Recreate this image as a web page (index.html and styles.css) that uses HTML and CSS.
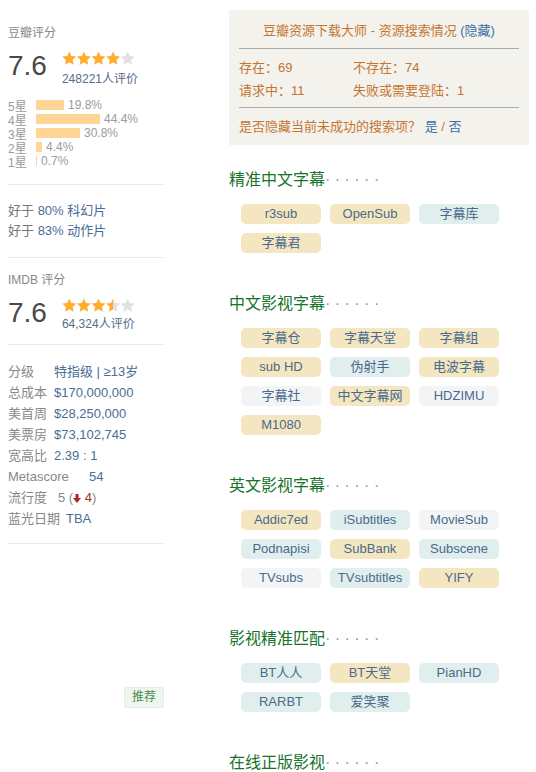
FILE: index.html
```html
<!DOCTYPE html>
<html lang="zh-CN">
<head>
  <meta charset="UTF-8" />
  <title>豆瓣资源下载大师</title>
  <link rel="stylesheet" href="styles.css">
</head>
<body>
  <div class="page">
    <aside class="aside">
      <div class="block block-douban">
        <div class="rating-title">豆瓣评分</div>
        <div class="rating-row">
          <strong class="rating-num">7.6</strong>
          <div class="rating-side">
            <svg class="stars" width="73" height="15" viewBox="0 0 73 15">
              <defs>
                <polygon id="starA" points="7.3,0 9.36,4.45 14.24,5.04 10.63,8.39 11.59,13.21 7.3,10.8 3.01,13.21 3.97,8.39 0.36,5.04 5.24,4.45" />
              </defs>
              <use href="#starA" x="0" y="0.5" fill="#ffac2d" />
              <use href="#starA" x="14.6" y="0.5" fill="#ffac2d" />
              <use href="#starA" x="29.2" y="0.5" fill="#ffac2d" />
              <use href="#starA" x="43.8" y="0.5" fill="#ffac2d" />
              <use href="#starA" x="58.4" y="0.5" fill="#e1e1e1" />
            </svg>
            <a class="rating-people">248221人评价</a>
          </div>
        </div>
        <div class="bars">
          <div class="bar-row"><span class="bar-label">5星</span><span class="bar" style="width: 28px"></span><span class="bar-pct">19.8%</span></div>
          <div class="bar-row"><span class="bar-label">4星</span><span class="bar" style="width: 64px"></span><span class="bar-pct">44.4%</span></div>
          <div class="bar-row"><span class="bar-label">3星</span><span class="bar" style="width: 44px"></span><span class="bar-pct">30.8%</span></div>
          <div class="bar-row"><span class="bar-label">2星</span><span class="bar" style="width: 6px"></span><span class="bar-pct">4.4%</span></div>
          <div class="bar-row"><span class="bar-label">1星</span><span class="bar" style="width: 1px"></span><span class="bar-pct">0.7%</span></div>
        </div>
      </div>

      <div class="block block-better">
        <div class="better">好于 <a>80% 科幻片</a></div>
        <div class="better">好于 <a>83% 动作片</a></div>
      </div>

      <div class="block block-imdb">
        <div class="rating-title">IMDB 评分</div>
        <div class="rating-row">
          <strong class="rating-num">7.6</strong>
          <div class="rating-side">
            <svg class="stars" width="73" height="15" viewBox="0 0 73 15">
              <defs>
                <polygon id="starB" points="7.3,0 9.36,4.45 14.24,5.04 10.63,8.39 11.59,13.21 7.3,10.8 3.01,13.21 3.97,8.39 0.36,5.04 5.24,4.45" />
                <linearGradient id="halfStar" x1="0" x2="1" y1="0" y2="0">
                  <stop offset="50%" stop-color="#ffac2d" />
                  <stop offset="50%" stop-color="#e1e1e1" />
                </linearGradient>
              </defs>
              <use href="#starB" x="0" y="0.5" fill="#ffac2d" />
              <use href="#starB" x="14.6" y="0.5" fill="#ffac2d" />
              <use href="#starB" x="29.2" y="0.5" fill="#ffac2d" />
              <use href="#starB" x="43.8" y="0.5" fill="url(#halfStar)" />
              <use href="#starB" x="58.4" y="0.5" fill="#e1e1e1" />
            </svg>
            <a class="rating-people">64,324人评价</a>
          </div>
        </div>
      </div>

      <div class="block block-info">
        <div class="info-row"><span class="pl">分级</span><a>特指级 | ≥13岁</a></div>
        <div class="info-row"><span class="pl">总成本</span><a>$170,000,000</a></div>
        <div class="info-row"><span class="pl">美首周</span><a>$28,250,000</a></div>
        <div class="info-row"><span class="pl">美票房</span><a>$73,102,745</a></div>
        <div class="info-row"><span class="pl">宽高比</span><a>2.39 : 1</a></div>
        <div class="info-row"><span class="pl pl-meta">Metascore</span><a>54</a></div>
        <div class="info-row"><span class="pl pl-pop">流行度</span><span class="pop">5 (<svg class="down" width="8" height="9" viewBox="0 0 8 9"><path d="M2.5 0h3v4h2.5L4 9 0 4h2.5z" fill="#b3261e" /></svg> <span class="pop-num">4</span>)</span></div>
        <div class="info-row"><span class="pl pl-date">蓝光日期</span><a>TBA</a></div>
      </div>

      <div class="recommend-wrap">
        <span class="recommend">推荐</span>
      </div>
    </aside>

    <main class="main">
      <div class="status-box">
        <div class="status-title">豆瓣资源下载大师 - 资源搜索情况 <a>(隐藏)</a></div>
        <div class="status-grid">
          <span>存在：69</span><span>不存在：74</span>
          <span>请求中：11</span><span>失败或需要登陆：1</span>
        </div>
        <div class="status-ask">是否隐藏当前未成功的搜索项？ <a>是</a> / <a>否</a></div>
      </div>

      <section class="site-group">
        <h2>精准中文字幕<span class="dots">·&nbsp;·&nbsp;·&nbsp;·&nbsp;·&nbsp;·</span></h2>
        <div class="tags">
          <a class="tag tag-yellow">r3sub</a>
          <a class="tag tag-yellow">OpenSub</a>
          <a class="tag tag-teal">字幕库</a>
          <a class="tag tag-yellow">字幕君</a>
        </div>
      </section>

      <section class="site-group">
        <h2>中文影视字幕<span class="dots">·&nbsp;·&nbsp;·&nbsp;·&nbsp;·&nbsp;·</span></h2>
        <div class="tags">
          <a class="tag tag-yellow">字幕仓</a>
          <a class="tag tag-yellow">字幕天堂</a>
          <a class="tag tag-yellow">字幕组</a>
          <a class="tag tag-yellow">sub HD</a>
          <a class="tag tag-teal">伪射手</a>
          <a class="tag tag-yellow">电波字幕</a>
          <a class="tag tag-gray">字幕社</a>
          <a class="tag tag-yellow">中文字幕网</a>
          <a class="tag tag-gray">HDZIMU</a>
          <a class="tag tag-yellow">M1080</a>
        </div>
      </section>

      <section class="site-group">
        <h2>英文影视字幕<span class="dots">·&nbsp;·&nbsp;·&nbsp;·&nbsp;·&nbsp;·</span></h2>
        <div class="tags">
          <a class="tag tag-yellow">Addic7ed</a>
          <a class="tag tag-teal">iSubtitles</a>
          <a class="tag tag-gray">MovieSub</a>
          <a class="tag tag-teal">Podnapisi</a>
          <a class="tag tag-yellow">SubBank</a>
          <a class="tag tag-teal">Subscene</a>
          <a class="tag tag-gray">TVsubs</a>
          <a class="tag tag-teal">TVsubtitles</a>
          <a class="tag tag-yellow">YIFY</a>
        </div>
      </section>

      <section class="site-group">
        <h2>影视精准匹配<span class="dots">·&nbsp;·&nbsp;·&nbsp;·&nbsp;·&nbsp;·</span></h2>
        <div class="tags">
          <a class="tag tag-teal">BT人人</a>
          <a class="tag tag-yellow">BT天堂</a>
          <a class="tag tag-teal">PianHD</a>
          <a class="tag tag-teal">RARBT</a>
          <a class="tag tag-teal">爱笑聚</a>
        </div>
      </section>

      <section class="site-group">
        <h2>在线正版影视<span class="dots">·&nbsp;·&nbsp;·&nbsp;·&nbsp;·&nbsp;·</span></h2>
      </section>
    </main>
  </div>
</body>
</html>
```

FILE: styles.css
```css
body {
  margin: 0;
  font-family: "Liberation Sans", Arial, "Noto Sans CJK SC", sans-serif;
  font-size: 13px;
  color: #494949;
  background: #fff;
}
a {
  color: #4a6d96;
  text-decoration: none;
}
.page {
  display: flex;
  align-items: flex-start;
}

/* left column */
.aside {
  width: 156px;
  margin-left: 8px;
  flex-shrink: 0;
}
.block {
  border-bottom: 1px solid #eaeaea;
}
.block-douban {
  padding: 25px 0 16px;
}
.block-better {
  padding: 16px 0;
}
.block-imdb {
  padding: 14px 0 12px;
}
.block-info {
  padding: 16px 0 14px;
}
.rating-title {
  font-size: 12px;
  line-height: 16px;
  color: #888;
}
.rating-row {
  display: flex;
  align-items: flex-start;
  margin-top: 10px;
}
.rating-num {
  font-size: 28px;
  line-height: 30px;
  font-weight: normal;
  color: #494949;
}
.rating-side {
  margin-left: 15px;
}
.stars {
  display: block;
}
.rating-people {
  display: block;
  margin-top: 5px;
  font-size: 12px;
  line-height: 16px;
  color: #5a6c88;
}
.block-imdb .rating-people {
  margin-top: 3px;
}
.bars {
  margin-top: 11px;
}
.bar-row {
  display: flex;
  align-items: center;
  height: 14px;
  font-size: 12px;
  color: #9b9b9b;
}
.bar-label {
  width: 28px;
}
.bar {
  height: 10px;
  background: #ffd596;
  margin-right: 4px;
}
.better {
  line-height: 20px;
  color: #777;
}
.info-row {
  line-height: 21px;
  white-space: nowrap;
}
.pl {
  display: inline-block;
  width: 46px;
  color: #888;
}
.pl-meta {
  width: 81px;
}
.pl-pop {
  width: 50px;
}
.pl-date {
  width: 58px;
}
.pop {
  color: #888;
}
.pop-num {
  color: #a0302a;
}
.down {
  vertical-align: -1px;
}
.recommend-wrap {
  display: flex;
  justify-content: flex-end;
  margin-top: 143px;
}
.recommend {
  padding: 0 7px;
  line-height: 19px;
  font-size: 12px;
  color: #4f8a55;
  background: #eef6ee;
  border: 1px solid #e2efe2;
  border-radius: 2px;
}

/* right column */
.main {
  width: 300px;
  margin-left: 65px;
  margin-top: 10px;
}
.status-box {
  background: #f3f2ec;
  padding: 11px 10px 7px;
  color: #c57532;
}
.status-title {
  text-align: center;
  line-height: 20px;
  padding-bottom: 7px;
  border-bottom: 1px solid #a9a9a9;
}
.status-grid {
  display: grid;
  grid-template-columns: 114px 1fr;
  line-height: 23px;
  padding: 7px 0 5px;
  border-bottom: 1px solid #a9a9a9;
}
.status-ask {
  line-height: 22px;
  padding-top: 8px;
}
.status-box a {
  color: #3a6fa6;
}
.site-group {
  padding-top: 25px;
}
.site-group + .site-group {
  padding-top: 41px;
}
.site-group h2 {
  margin: 0;
  font-size: 16px;
  line-height: 20px;
  font-weight: normal;
  color: #17732b;
}
.dots {
  color: #999;
}
.tags {
  display: grid;
  grid-template-columns: repeat(3, 80px);
  gap: 9px;
  padding-left: 12px;
  margin-top: 14px;
}
.tag {
  height: 20px;
  line-height: 20px;
  text-align: center;
  border-radius: 5px;
  color: #4a6a8c;
  white-space: nowrap;
}
.tag-yellow {
  background: #f4e6c0;
}
.tag-teal {
  background: #e0eeed;
}
.tag-gray {
  background: #f3f4f6;
}
```
